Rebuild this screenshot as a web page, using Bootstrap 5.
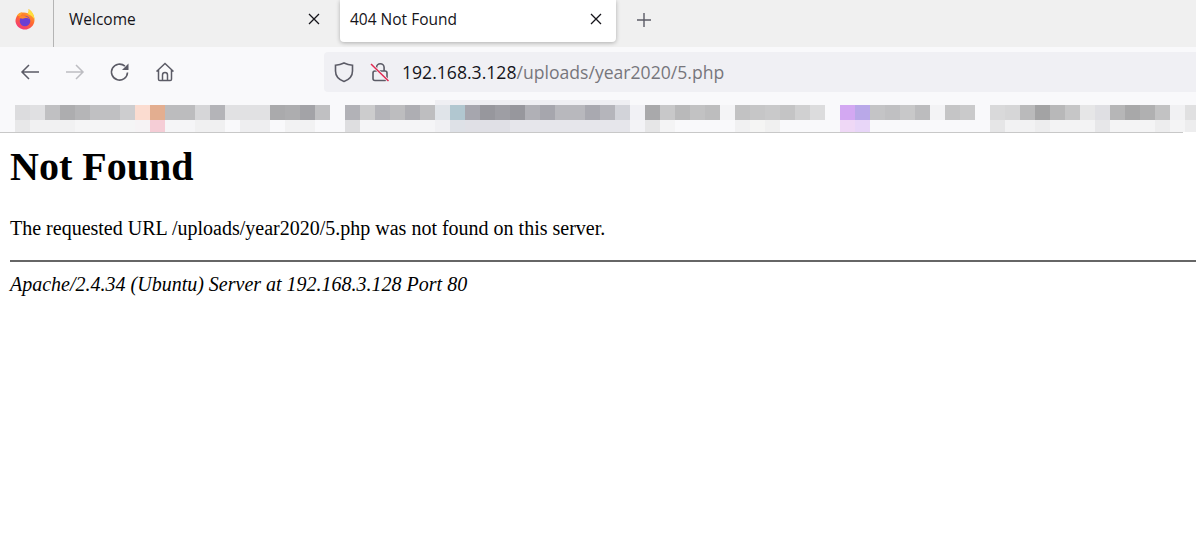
<!doctype html>
<html lang="en">
<head>
<meta charset="utf-8">
<title>404 Not Found</title>
<link href="https://cdn.jsdelivr.net/npm/bootstrap@5.3.0/dist/css/bootstrap.min.css" rel="stylesheet">
<style>
body{background:#fff;color:#000;font-family:"Liberation Serif",serif;font-size:20px;line-height:23px;overflow:hidden}
.ui{font-family:"Open Sans","Noto Sans",sans-serif;color:#15141a}
.strip{height:47px;background:#f0f0f0}
.logo-cell{width:54px;height:47px;border-right:1px solid #b4b4b4}
.logo-cell svg{margin-left:-3px;margin-top:-9px}
.tab-item{width:276px;height:42px;font-size:15.5px;padding:0 10px 4px 15px;letter-spacing:0}
.tab-idle{margin-right:10px;padding-right:9px;padding-left:15px}
.tab-active{background:#fff;border-radius:0 0 4px 4px;box-shadow:0 1px 4px rgba(0,0,0,.28);padding-left:10px;padding-right:13px}
.plus-cell{margin-left:20px;margin-top:-7px}
.tools{height:53px;background:#f9f9fb;padding-bottom:3px}
.tool-icons{width:324px;padding-left:19px;gap:23px}
.urlbar{height:40px;background:#f0f0f4;border-radius:4px 0 0 4px;padding-left:10px;font-size:17.6px}
.url-host{color:#15141a;margin-left:12px}
.url-path{color:#77767c}
.marks{height:32px;background:#f9f9fb}
.marks svg{display:block}
.rule-line{height:1px;background:#c8c8c8;margin-right:13px}
.page-body{padding:11px 10px 10px}
.page-body h1{font-family:inherit;font-size:40px;font-weight:700;line-height:46px;margin:0 0 27px}
.page-body p{margin:0 0 20px}
.page-body hr{margin:0 -10px 0 0;border:0;border-top:2px solid #666;opacity:1;height:0}
.page-body address{margin:11px 0 0;font-style:italic}
</style>
</head>
<body>
<header class="ui">
  <div class="strip d-flex">
    <div class="logo-cell d-flex align-items-center justify-content-center">
      <svg width="22" height="22" viewBox="0 0 22 22" aria-hidden="true">
        <defs>
          <linearGradient id="fx" x1="0.75" y1="0" x2="0.25" y2="1"><stop offset="0" stop-color="#ffb52e"/><stop offset=".5" stop-color="#ff6a2e"/><stop offset="1" stop-color="#f2357f"/></linearGradient>
        </defs>
        <path d="M14.500 1c.6 1.800.2 3-.5 4.200C9 3.500 4.800 4.800 2.900 8 1.500 10.500 1 13 2 15.500c1.300 3.600 4.800 6 8.800 6 5.200 0 9.700-4.200 9.700-9.600 0-4.500-2.400-8.500-6-10.900z" fill="url(#fx)"/>
        <path d="M14.500 1c3.500 2.400 6 6.400 6 10.500-1.300-2.800-3.500-4.600-6.800-5.600.9-1.500 1.300-3.100.8-4.900z" fill="#ffdf3d"/>
        <path d="M2.900 8c1-2.400 3-3.600 5.600-3.800L7 7.500C5.500 8 4 8.300 2.900 8z" fill="#ffa02e"/>
        <circle cx="11" cy="13" r="5.300" fill="#6b3fd4"/>
        <path d="M4.500 8.800c3.300-1.600 7.500-2.300 12.300 3.200-2.300-1.800-4.300-2.300-6.400-1.700-1.300.4-3.300.9-5.900-1.500z" fill="#ff8a2a"/>
      </svg>
    </div>
    <div class="tab-item tab-idle d-flex align-items-center justify-content-between">
      <span>Welcome</span>
      <svg width="14" height="14" viewBox="0 0 14 14" aria-hidden="true"><path d="M2 2l10 10M12 2L2 12" stroke="#15141a" stroke-width="1.300" fill="none"/></svg>
    </div>
    <div class="tab-item tab-active d-flex align-items-center justify-content-between">
      <span>404 Not Found</span>
      <svg width="14" height="14" viewBox="0 0 14 14" aria-hidden="true"><path d="M2 2l10 10M12 2L2 12" stroke="#15141a" stroke-width="1.300" fill="none"/></svg>
    </div>
    <div class="plus-cell d-flex align-items-center">
      <svg width="16" height="16" viewBox="0 0 16 16" aria-hidden="true"><path d="M8 1v14M1 8h14" stroke="#5b5b66" stroke-width="1.400" fill="none"/></svg>
    </div>
  </div>
  <div class="tools d-flex align-items-center">
    <div class="tool-icons d-flex align-items-center">
      <svg width="22" height="22" viewBox="0 0 22 22" aria-hidden="true"><path d="M20 11H3M10 4l-7 7 7 7" stroke="#5b5b66" stroke-width="1.500" fill="none"/></svg>
      <svg width="22" height="22" viewBox="0 0 22 22" aria-hidden="true"><path d="M2 11h17M12 4l7 7-7 7" stroke="#bdbdc2" stroke-width="1.500" fill="none"/></svg>
      <svg width="22" height="22" viewBox="0 0 22 22" aria-hidden="true"><path d="M18.500 11.500a8 8 0 1 1-2.600-6.300" stroke="#5b5b66" stroke-width="1.600" fill="none"/><path d="M19.500 2.500v6.500H13z" fill="#5b5b66"/></svg>
      <svg width="22" height="22" viewBox="0 0 22 22" aria-hidden="true"><path d="M2.500 10.500L11 2.500l8.500 8M4.500 9v9.200c0 .7.500 1.300 1.300 1.300h10.400c.8 0 1.300-.6 1.300-1.300V9M8.500 19.500V14a2.500 2.500 0 0 1 5 0v5.500" stroke="#5b5b66" stroke-width="1.500" fill="none"/></svg>
    </div>
    <div class="urlbar flex-grow-1 d-flex align-items-center">
      <svg class="me-3" width="20" height="22" viewBox="0 0 20 22" aria-hidden="true"><path d="M10 2c2.500 1.200 5.500 2 8.500 2.200V10c0 5-3.500 8.700-8.500 10.500C5 18.700 1.500 15 1.500 10V4.200C4.500 4 7.500 3.200 10 2z" stroke="#5b5b66" stroke-width="1.600" fill="none"/></svg>
      <svg width="20" height="22" viewBox="0 0 20 22" aria-hidden="true"><path d="M6.500 10V6.500a3.800 3.800 0 0 1 7.600 0V10" stroke="#5b5b66" stroke-width="1.600" fill="none"/><rect x="3" y="10" width="14" height="9.500" rx="2" stroke="#5b5b66" stroke-width="1.600" fill="none"/><path d="M1 3l17.500 17" stroke="#f0f0f4" stroke-width="3"/><path d="M1 3l17.500 17" stroke="#e22850" stroke-width="1.500"/></svg>
      <span class="url-host">192.168.3.128<span class="url-path">/uploads/year2020/5.php</span></span>
    </div>
  </div>
  <div class="marks">
    <svg width="1196" height="32" viewBox="0 0 1196 32" aria-hidden="true">
      <rect x="435" y="0" width="195" height="5" fill="#efeff3"/>
      <g>
        <rect x="15" y="5" width="15" height="15" fill="#dcdcde"/><rect x="30" y="5" width="15" height="15" fill="#e0e0e2"/><rect x="45" y="5" width="15" height="15" fill="#c0c0c2"/><rect x="60" y="5" width="15" height="15" fill="#adadaf"/><rect x="75" y="5" width="15" height="15" fill="#b5b5b7"/><rect x="90" y="5" width="30" height="15" fill="#c0c0c2"/><rect x="120" y="5" width="15" height="15" fill="#cdcdcf"/><rect x="135" y="5" width="15" height="15" fill="#fbdcd0"/><rect x="150" y="5" width="15" height="15" fill="#e3ae90"/><rect x="165" y="5" width="30" height="15" fill="#bcbcbe"/><rect x="195" y="5" width="15" height="15" fill="#d6d6d8"/><rect x="210" y="5" width="15" height="15" fill="#b4b4b8"/><rect x="225" y="5" width="45" height="15" fill="#e1e1e3"/><rect x="270" y="5" width="15" height="15" fill="#aaaaac"/><rect x="285" y="5" width="15" height="15" fill="#adadaf"/><rect x="300" y="5" width="15" height="15" fill="#a3a3a7"/><rect x="315" y="5" width="15" height="15" fill="#c0c0c2"/>
        <rect x="345" y="5" width="15" height="15" fill="#b2b2b7"/><rect x="360" y="5" width="15" height="15" fill="#cccccd"/><rect x="375" y="5" width="15" height="15" fill="#b5b5ba"/><rect x="390" y="5" width="15" height="15" fill="#bdbdbf"/><rect x="405" y="5" width="15" height="15" fill="#aeaeb3"/><rect x="420" y="5" width="15" height="15" fill="#bebec0"/><rect x="435" y="5" width="15" height="15" fill="#e0e4e9"/><rect x="450" y="5" width="15" height="15" fill="#b1c7d0"/><rect x="465" y="5" width="15" height="15" fill="#a6a6ae"/><rect x="480" y="5" width="15" height="15" fill="#97979d"/><rect x="495" y="5" width="15" height="15" fill="#9e9ea4"/><rect x="510" y="5" width="15" height="15" fill="#97979d"/><rect x="525" y="5" width="15" height="15" fill="#b0b0b6"/><rect x="540" y="5" width="15" height="15" fill="#a6a6ad"/><rect x="555" y="5" width="30" height="15" fill="#b8b8bd"/><rect x="585" y="5" width="15" height="15" fill="#a9a9b0"/><rect x="600" y="5" width="15" height="15" fill="#b5b5bb"/><rect x="615" y="5" width="15" height="15" fill="#d2d3d9"/><rect x="630" y="5" width="15" height="15" fill="#f1f1f5"/>
        <rect x="645" y="5" width="15" height="15" fill="#a9a9ab"/><rect x="660" y="5" width="15" height="15" fill="#c8c8c9"/><rect x="675" y="5" width="15" height="15" fill="#b9b9ba"/><rect x="690" y="5" width="15" height="15" fill="#c2c2c3"/><rect x="705" y="5" width="15" height="15" fill="#bdbdbe"/><rect x="720" y="5" width="15" height="15" fill="#f4f4f6"/><rect x="735" y="5" width="15" height="15" fill="#c2c2c3"/><rect x="750" y="5" width="15" height="15" fill="#c6c6c7"/><rect x="765" y="5" width="15" height="15" fill="#c9c9ca"/><rect x="780" y="5" width="15" height="15" fill="#c4c4c5"/><rect x="795" y="5" width="15" height="15" fill="#d0d0d1"/><rect x="810" y="5" width="15" height="15" fill="#dcdcdd"/><rect x="840" y="5" width="15" height="15" fill="#d3a8f2"/><rect x="855" y="5" width="15" height="15" fill="#b9a8e8"/><rect x="870" y="5" width="15" height="15" fill="#c4c4c6"/><rect x="885" y="5" width="15" height="15" fill="#c0c0c2"/><rect x="900" y="5" width="15" height="15" fill="#c8c8c9"/><rect x="915" y="5" width="15" height="15" fill="#bcbcbe"/><rect x="930" y="5" width="15" height="15" fill="#f3f3f5"/><rect x="945" y="5" width="15" height="15" fill="#c5c5c6"/><rect x="960" y="5" width="15" height="15" fill="#cacacb"/>
        <rect x="990" y="5" width="15" height="15" fill="#d9d9da"/><rect x="1005" y="5" width="15" height="15" fill="#d6d6d7"/><rect x="1020" y="5" width="15" height="15" fill="#bababb"/><rect x="1035" y="5" width="15" height="15" fill="#a3a3a4"/><rect x="1050" y="5" width="15" height="15" fill="#b8b8b9"/><rect x="1065" y="5" width="15" height="15" fill="#c6c6c7"/><rect x="1080" y="5" width="15" height="15" fill="#e6e6e7"/><rect x="1095" y="5" width="15" height="15" fill="#dfdfe3"/><rect x="1110" y="5" width="15" height="15" fill="#b6b6b7"/><rect x="1125" y="5" width="15" height="15" fill="#a8a8a9"/><rect x="1140" y="5" width="15" height="15" fill="#b0b0b1"/><rect x="1155" y="5" width="15" height="15" fill="#c2c2c3"/><rect x="1170" y="5" width="15" height="15" fill="#f1f1f3"/><rect x="1185" y="5" width="11" height="15" fill="#e0e0e1"/>
      </g>
      <g>
        <rect x="15" y="20" width="15" height="12" fill="#e8e8e9"/><rect x="30" y="20" width="45" height="12" fill="#f1f1f2"/><rect x="75" y="20" width="60" height="12" fill="#f5f5f6"/><rect x="135" y="20" width="15" height="12" fill="#f6f3f5"/><rect x="150" y="20" width="15" height="12" fill="#f5cdd6"/><rect x="165" y="20" width="30" height="12" fill="#f5f5f7"/><rect x="195" y="20" width="30" height="12" fill="#f0f0f1"/><rect x="240" y="20" width="30" height="12" fill="#eeeef0"/><rect x="285" y="20" width="30" height="12" fill="#f2f2f3"/>
        <rect x="345" y="20" width="15" height="12" fill="#dedee0"/><rect x="360" y="20" width="75" height="12" fill="#f5f5f7"/><rect x="435" y="20" width="15" height="12" fill="#f0f0f3"/><rect x="450" y="20" width="15" height="12" fill="#dee1e7"/><rect x="465" y="20" width="45" height="12" fill="#e0e0e6"/><rect x="510" y="20" width="120" height="12" fill="#e6e6eb"/><rect x="630" y="20" width="15" height="12" fill="#f3f3f6"/><rect x="645" y="20" width="15" height="12" fill="#e6e6e7"/><rect x="660" y="20" width="15" height="12" fill="#f4f4f5"/><rect x="735" y="20" width="15" height="12" fill="#f1f1f2"/><rect x="750" y="20" width="15" height="12" fill="#f5f5f4"/><rect x="765" y="20" width="15" height="12" fill="#f0f0f0"/>
        <rect x="840" y="20" width="15" height="12" fill="#efd8f6"/><rect x="855" y="20" width="15" height="12" fill="#e8d6f8"/><rect x="990" y="20" width="15" height="12" fill="#e6e6e7"/><rect x="1005" y="20" width="30" height="12" fill="#f2f2f3"/><rect x="1035" y="20" width="15" height="12" fill="#ededee"/><rect x="1050" y="20" width="45" height="12" fill="#f3f3f4"/><rect x="1095" y="20" width="15" height="12" fill="#e7e7e9"/><rect x="1110" y="20" width="45" height="12" fill="#f4f4f5"/><rect x="1155" y="20" width="15" height="12" fill="#ededee"/><rect x="1170" y="20" width="15" height="12" fill="#f4f4f5"/><rect x="1185" y="20" width="11" height="12" fill="#ededee"/>
      </g>
    </svg>
  </div>
  <div class="rule-line"></div>
</header>
<main class="page-body">
  <h1>Not Found</h1>
  <p>The requested URL /uploads/year2020/5.php was not found on this server.</p>
  <hr>
  <address>Apache/2.4.34 (Ubuntu) Server at 192.168.3.128 Port 80</address>
</main>
</body>
</html>
